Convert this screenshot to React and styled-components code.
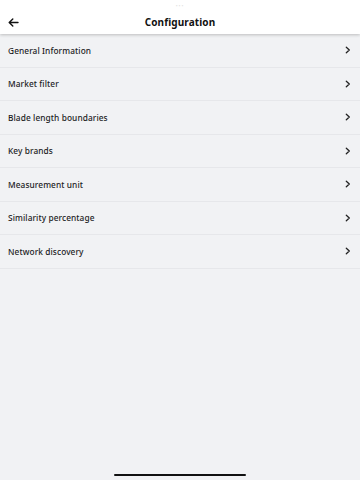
import React from 'react';
import styled, { createGlobalStyle } from 'styled-components';

const GlobalStyle = createGlobalStyle`
  html, body {
    margin: 0;
    padding: 0;
    background: #f1f2f4;
  }
  body {
    font-family: "Noto Sans", "DejaVu Sans", sans-serif;
    color: #1c1c1e;
  }
`;

const Page = styled.div`
  width: 360px;
  height: 480px;
  display: flex;
  flex-direction: column;
  background: #f1f2f4;
  overflow: hidden;
`;

const Header = styled.header`
  height: 34px;
  background: #ffffff;
  display: grid;
  grid-template-columns: 40px 1fr 40px;
  align-items: end;
  padding-bottom: 5px;
  box-sizing: border-box;
  box-shadow: 0 1px 3px rgba(0, 0, 0, 0.22);
  position: relative;
  z-index: 1;
`;

const Grabber = styled.div`
  position: absolute;
  top: 3px;
  left: 50%;
  transform: translateX(-50%);
  font-size: 5px;
  color: #e2e2e2;
  letter-spacing: 1px;
`;

const BackButton = styled.button`
  border: 0;
  background: none;
  padding: 0 0 0 8px;
  height: 14px;
  display: flex;
  align-items: center;
  color: #111;
`;

const Title = styled.h1`
  margin: 0;
  text-align: center;
  font-size: 10px;
  font-weight: 700;
  line-height: 14px;
  letter-spacing: 0.1px;
  color: #111;
`;

const List = styled.ul`
  list-style: none;
  margin: 0;
  padding: 0;
`;

const Row = styled.li`
  height: 33.5px;
  box-sizing: border-box;
  padding: 0 9px 0 8px;
  display: flex;
  align-items: center;
  justify-content: space-between;
  border-bottom: 1px solid #e6e7ea;
  font-size: 8.3px;
  font-weight: 500;
  letter-spacing: 0.1px;
  color: #1c1c1e;
`;

const Spacer = styled.div`
  flex: 1;
`;

const HomeIndicator = styled.div`
  width: 132px;
  height: 2.5px;
  border-radius: 2px;
  background: #111;
  margin: 0 auto 4px;
`;

const items = [
  'General Information',
  'Market filter',
  'Blade length boundaries',
  'Key brands',
  'Measurement unit',
  'Similarity percentage',
  'Network discovery',
];

const Chevron = () => (
  <svg width="6" height="8" viewBox="0 0 6 8" fill="none">
    <path d="M1.3 1.2 L4.3 4 L1.3 6.8" stroke="#222" strokeWidth="1.3" strokeLinecap="round" strokeLinejoin="round" />
  </svg>
);

const BackArrow = () => (
  <svg width="11" height="9" viewBox="0 0 11 9" fill="none">
    <path d="M10 4.5 H1.5 M4.8 1 L1.2 4.5 L4.8 8" stroke="#111" strokeWidth="1.4" strokeLinecap="round" strokeLinejoin="round" />
  </svg>
);

export default function App() {
  return (
    <Page>
      <GlobalStyle />
      <Header>
        <Grabber>•••</Grabber>
        <BackButton aria-label="Back">
          <BackArrow />
        </BackButton>
        <Title>Configuration</Title>
        <div />
      </Header>
      <List>
        {items.map(item => (
          <Row key={item}>
            {item}
            <Chevron />
          </Row>
        ))}
      </List>
      <Spacer />
      <HomeIndicator />
    </Page>
  );
}
